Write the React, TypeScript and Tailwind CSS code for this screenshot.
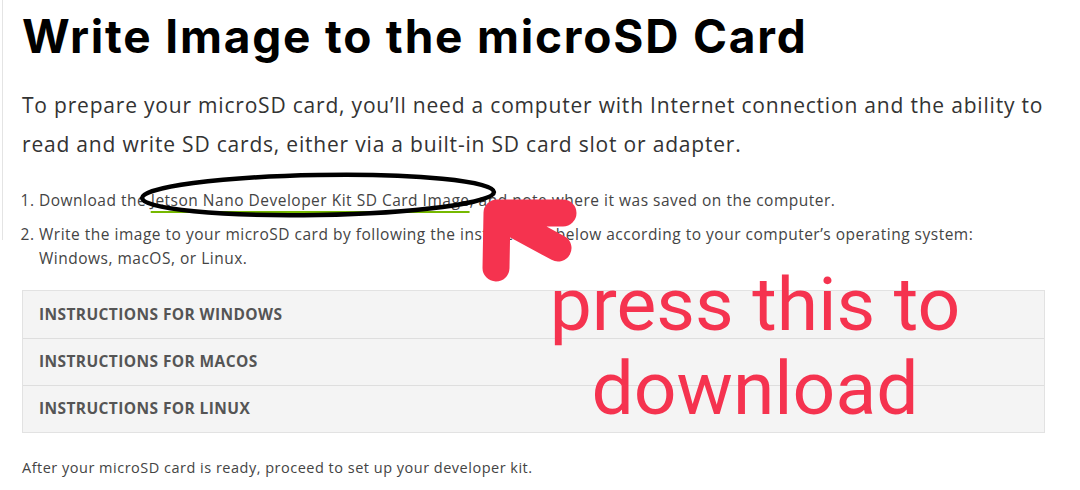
import React from 'react';

const rows = ['Instructions for Windows', 'Instructions for macOS', 'Instructions for Linux'];

function Annotations() {
  return (
    <>
      <svg className="absolute left-0 top-0 pointer-events-none" width={1080} height={490} viewBox="0 0 1080 490">
        <ellipse cx={318} cy={195} rx={176} ry={20} fill="none" stroke="#000" strokeWidth={4.5} transform="rotate(-1 318 195)" />
        <path d="M563 213 L497 213 L496 268 M499 216 L558 248" fill="none" stroke="#f5334f" strokeWidth={27} strokeLinecap="round" strokeLinejoin="round" />
      </svg>
      <div className="absolute left-[535px] top-[262px] w-[440px] text-center text-[#f5334f] text-[75px] leading-[84px] font-['Roboto',sans-serif] pointer-events-none">
        press this to
        <br />
        download
      </div>
    </>
  );
}

export default function App() {
  return (
    <div className="relative w-[1080px] h-[490px] overflow-hidden bg-white">
      <div className="absolute left-[2px] top-0 h-[240px] w-px bg-[#e4e4e4]" />
      <div className="pl-[22px] pr-[30px] pt-[8px] font-['Open_Sans',sans-serif]">
        <h1 className="font-['Inter',sans-serif] font-bold text-[46px] leading-[56px] text-black tracking-[1.8px]">
          Write Image to the microSD Card
        </h1>
        <p className="mt-[22px] text-[21px] leading-[39px] text-[#333] tracking-[0.8px]">
          To prepare your microSD card, you’ll need a computer with Internet connection and the ability to read and write SD cards, either via a built-in SD card slot or adapter.
        </p>
        <ol className="mt-[24px] text-[15.5px] leading-[24px] text-[#444] tracking-[0.5px] list-decimal pl-[17px] space-y-[10px]">
          <li>
            Download the{' '}
            <span className="underline decoration-[#76b900] decoration-2 underline-offset-[5px]">Jetson Nano Developer Kit SD Card Image</span>, and note where it was saved on the computer.
          </li>
          <li>
            Write the image to your microSD card by following the instructions below according to your computer’s operating system: Windows, macOS, or Linux.
          </li>
        </ol>
        <div className="mt-[20px] w-[1023px] border border-[#e2e2e2] bg-[#f4f4f4]">
          {rows.map((r, i) => (
            <div
              key={r}
              className={`h-[47px] flex items-center pl-[16px] text-[15.5px] font-bold uppercase tracking-[0.4px] text-[#555] ${i > 0 ? 'border-t border-[#dedede]' : ''}`}
            >
              {r}
            </div>
          ))}
        </div>
        <p className="mt-[24px] text-[14.5px] text-[#444] tracking-[0.5px]">After your microSD card is ready, proceed to set up your developer kit.</p>
      </div>
      <Annotations />
    </div>
  );
}
